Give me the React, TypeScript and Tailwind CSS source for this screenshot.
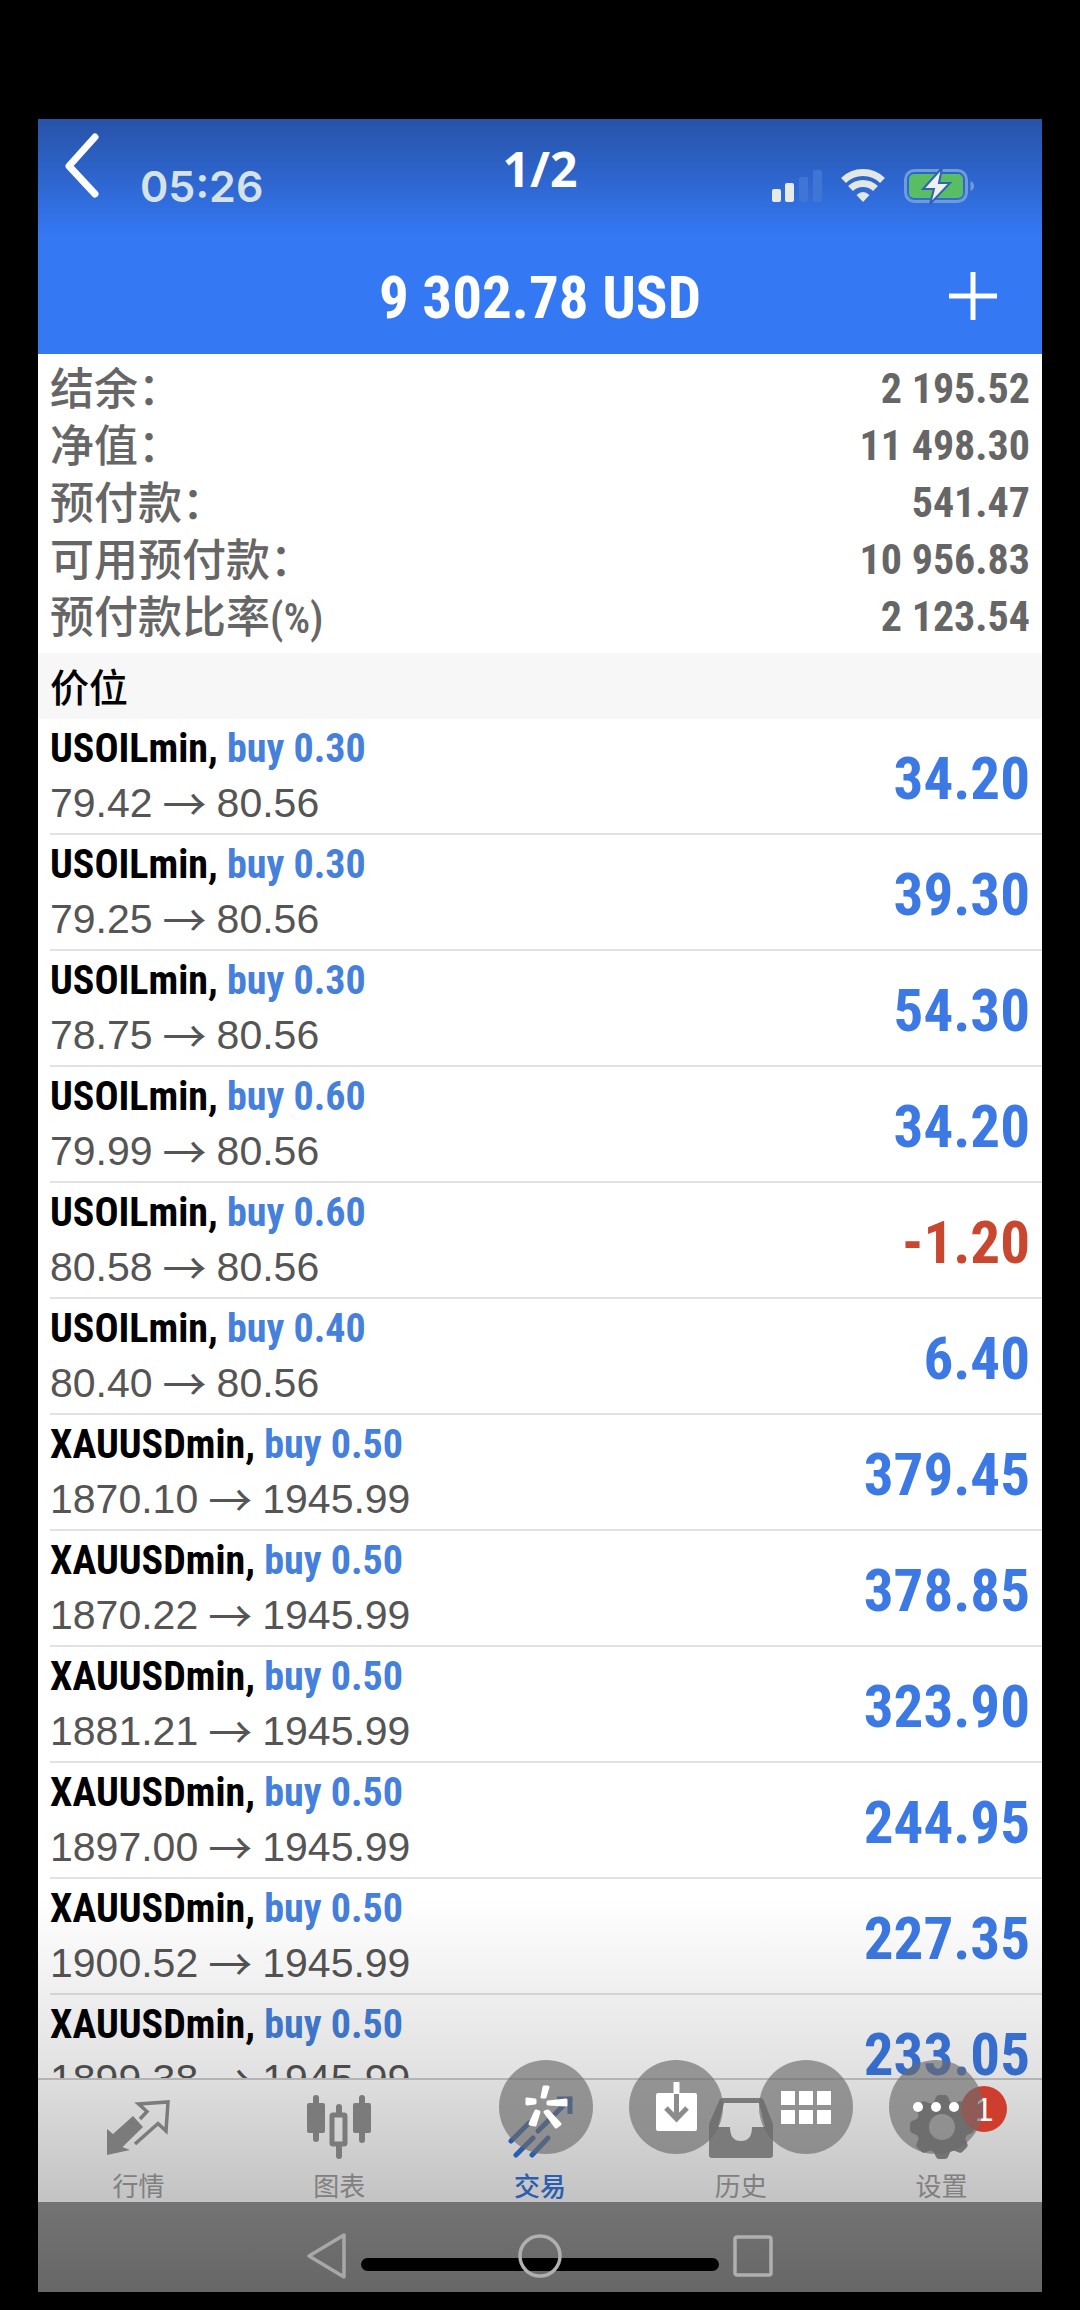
import React from "react";

const SANS = "font-['Roboto_Condensed','Liberation_Sans','Noto_Sans_CJK_SC',sans-serif]";

const summary = [
  { label: "结余：", value: "2 195.52" },
  { label: "净值：", value: "11 498.30" },
  { label: "预付款：", value: "541.47" },
  { label: "可用预付款：", value: "10 956.83" },
  { label: "预付款比率", suffix: "(%)", value: "2 123.54" },
];

const positions = [
  ["USOILmin", "0.30", "79.42", "80.56", "34.20"],
  ["USOILmin", "0.30", "79.25", "80.56", "39.30"],
  ["USOILmin", "0.30", "78.75", "80.56", "54.30"],
  ["USOILmin", "0.60", "79.99", "80.56", "34.20"],
  ["USOILmin", "0.60", "80.58", "80.56", "-1.20"],
  ["USOILmin", "0.40", "80.40", "80.56", "6.40"],
  ["XAUUSDmin", "0.50", "1870.10", "1945.99", "379.45"],
  ["XAUUSDmin", "0.50", "1870.22", "1945.99", "378.85"],
  ["XAUUSDmin", "0.50", "1881.21", "1945.99", "323.90"],
  ["XAUUSDmin", "0.50", "1897.00", "1945.99", "244.95"],
  ["XAUUSDmin", "0.50", "1900.52", "1945.99", "227.35"],
  ["XAUUSDmin", "0.50", "1899.38", "1945.99", "233.05"],
];

function StatusIcons() {
  return (
    <div className="flex items-center gap-[19px]">
      <svg width="50" height="34" viewBox="0 0 50 34" fill="#e6ebe6">
        <rect x="0" y="20" width="9" height="13" rx="2" />
        <rect x="13" y="14" width="9" height="19" rx="2" />
        <rect x="27" y="8" width="9" height="25" rx="2" fill="#3f76d6" />
        <rect x="41" y="1" width="9" height="32" rx="2" fill="#3f76d6" />
      </svg>
      <svg width="44" height="34" viewBox="0 0 44 34" fill="none" stroke="#e2e8e4" strokeWidth="7">
        <path d="M2.500 11.500a28 28 0 0 1 39 0" />
        <path d="M9.500 19.500a18 18 0 0 1 25 0" />
        <path d="M15.500 26q6.500-6 13 0L22 33z" fill="#e2e8e4" stroke="none" />
      </svg>
      <svg width="70" height="38" viewBox="0 0 70 38" fill="none">
        <rect x="1.500" y="3.500" width="61" height="31" rx="9" stroke="#6f9bd8" strokeWidth="3" />
        <rect x="5" y="7" width="54" height="24" rx="5" fill="#58bd63" />
        <path d="M66.500 14q3.500 1.500 3.500 5t-3.500 5z" fill="#6f9bd8" />
        <path d="M38 1L19 22h11l-4 15 20-21H35z" fill="#eef1ee" stroke="#2f62b8" strokeWidth="2" />
      </svg>
    </div>
  );
}

const QuotesIcon = () => (
  <svg width="66" height="66" viewBox="0 0 66 66" fill="#7b7b7b">
    <path d="M2 35L8 40 28 22 38 33 17.500 53 25 56 2 61z" />
    <path d="M35 25L42 17.500 33.600 10 63 8 61 37 53 29.500 30 50" fill="none" stroke="#7b7b7b" strokeWidth="3.500" />
  </svg>
);

const ChartIcon = () => (
  <svg width="66" height="66" viewBox="0 0 66 66" fill="#7b7b7b">
    <rect x="1" y="9" width="18" height="30" rx="2" />
    <rect x="7" y="1" width="6" height="47" rx="3" />
    <rect x="47" y="9" width="18" height="30" rx="2" />
    <rect x="53" y="1" width="6" height="48" rx="3" />
    <rect x="30" y="10" width="6" height="12" rx="3" />
    <rect x="30" y="48" width="6" height="17" rx="3" />
    <rect x="26" y="21" width="13" height="29" rx="1" fill="none" stroke="#7b7b7b" strokeWidth="5" />
  </svg>
);

const TradeIcon = () => (
  <svg width="66" height="66" viewBox="0 0 66 66" fill="none" stroke="#2b5db0" strokeWidth="5">
    <path d="M50 5H63V20" />
    <path d="M63 5L31 37M22 29L4 47M26 44L9 61M41 44L25 61" strokeLinecap="round" />
  </svg>
);

const HistoryIcon = () => (
  <svg width="66" height="66" viewBox="0 0 66 66">
    <path
      fillRule="evenodd"
      fill="#7b7b7b"
      d="M15 4H52Q55 4 56 7L65 30V61Q65 64 62 64H4Q1 64 1 61V30L11 7Q12 4 15 4zM16 9L10 33H22Q22 47 33 47T44 33H57L51 9z"
    />
  </svg>
);

const SettingsIcon = () => (
  <svg width="66" height="66" viewBox="0 0 66 66" fill="#747474">
    <circle cx="33" cy="33" r="19.500" fill="none" stroke="#747474" strokeWidth="13" />
    {[0, 45, 90, 135, 180, 225, 270, 315].map((angle) => (
      <path key={angle} d="M24 10L27 3Q28 1 30 1H36Q38 1 39 3L42 10z" transform={`rotate(${angle} 33 33)`} />
    ))}
  </svg>
);

const tabs = [
  { label: "行情", Icon: QuotesIcon },
  { label: "图表", Icon: ChartIcon },
  { label: "交易", Icon: TradeIcon, active: true },
  { label: "历史", Icon: HistoryIcon },
  { label: "设置", Icon: SettingsIcon, badge: "1" },
];

const viewerActions = [
  {
    label: "Edit",
    art: (
      <g fill="#fff" stroke="#fff" strokeWidth="3" strokeLinejoin="round">
        <path d="M43 37L45 27 49 27 46 37zM36 40L28 39 28 44 36 43zM49 42L67 40 67 45 49 44zM37 51L31 64 36 65 40 52zM46 52L57 67 61 64 49 51z" />
      </g>
    ),
  },
  {
    label: "Save",
    art: (
      <>
        <rect x="27" y="33" width="41" height="38" rx="2" fill="#fff" />
        <path d="M47.500 22V34" stroke="#fff" strokeWidth="6" />
        <path d="M47.500 34V59M37 48L47.500 59 58 48" stroke="#8c8c8c" strokeWidth="5" />
      </>
    ),
  },
  {
    label: "Gallery",
    art: (
      <path fill="#fff" d="M22 31h14v14H22zM40 31h14v14H40zM58 31h14v14H58zM22 50h14v14H22zM40 50h14v14H40zM58 50h14v14H58z" />
    ),
  },
  {
    label: "More",
    art: (
      <g fill="#fff">
        <circle cx="29" cy="47" r="5" />
        <circle cx="47" cy="47" r="5" />
        <circle cx="65" cy="47" r="5" />
      </g>
    ),
  },
];

export default function App() {
  return (
    <div className={`flex h-screen flex-col bg-black px-[38px] pt-[119px] pb-[18px] ${SANS}`}>
      <main className="relative flex min-h-0 flex-1 flex-col overflow-hidden bg-white">
        <header className="relative shrink-0 bg-[#3478f4] bg-linear-to-b from-[#2753a8] from-0% to-[#3478f4] to-50% text-white">
          <div className="flex h-[134px] items-center justify-between pr-[68px] pl-[102px]">
            <time className="font-['Inter',sans-serif] text-[43px] font-semibold text-[#d5e2e6]">05:26</time>
            <StatusIcons />
          </div>
          <div className="grid h-[101px] grid-cols-[1fr_auto_1fr] items-center px-[45px] pb-4">
            <h1 className="col-start-2 pt-1 text-[59px] leading-none font-bold">9 302.78 USD</h1>
            <button aria-label="Add" className="justify-self-end">
              <svg width="48" height="48" viewBox="0 0 48 48" stroke="#fff" strokeWidth="5">
                <path d="M24 0V48M0 24H48" />
              </svg>
            </button>
          </div>
          <button aria-label="Back" className="absolute top-[12px] left-[26px]">
            <svg width="38" height="68" viewBox="0 0 38 68" fill="none" stroke="#fff" strokeWidth="7" strokeLinecap="round" strokeLinejoin="round">
              <path d="M31 6L5 35 31 63" />
            </svg>
          </button>
          <p className="absolute inset-x-0 top-[24px] text-center font-['Noto_Sans',sans-serif] text-[48px] leading-[52px] font-bold">1/2</p>
        </header>

        <dl className="h-[299px] shrink-0 px-3 pt-1 text-[#666]">
          {summary.map((s) => (
            <div key={s.label} className="flex h-[57px] items-center justify-between">
              <dt className="font-['Noto_Sans_CJK_SC',sans-serif] text-[44px] leading-[57px] font-medium">
                {s.label}
                {s.suffix && <span className="font-['Roboto_Condensed','Liberation_Sans',sans-serif] text-[42px] leading-none">{s.suffix}</span>}
              </dt>
              <dd className="pt-1 text-[42px] leading-none font-bold">{s.value}</dd>
            </div>
          ))}
        </dl>

        <h2 className="shrink-0 bg-[#f7f7f7] px-3 pb-0.5 font-['Noto_Sans_CJK_SC',sans-serif] text-[39px] leading-[64px] font-medium text-black">价位</h2>

        <section className="relative min-h-0 flex-1 overflow-hidden">
          <ul className="pl-3">
            {positions.map(([symbol, volume, open, current, profit], i) => (
              <li key={i} className="flex h-[116px] items-center justify-between border-b-2 border-[#e2e2e2] pr-3">
                <div>
                  <p className="text-[40px] leading-[55px] font-bold text-black">
                    {symbol}, <span className="text-[#4480dc]">buy {volume}</span>
                  </p>
                  <p className="flex items-center gap-2.5 font-['Liberation_Sans',sans-serif] text-[41px] leading-[55px] text-[#555]">
                    <span>{open}</span>
                    <span className="pb-1 font-['Noto_Sans_CJK_SC',sans-serif] text-[44px] leading-none">→</span>
                    <span>{current}</span>
                  </p>
                </div>
                <p className={`pt-1 text-[59px] leading-none font-bold ${profit.startsWith("-") ? "text-[#c9462f]" : "text-[#3c79e4]"}`}>
                  {profit}
                </p>
              </li>
            ))}
          </ul>
          <div className="pointer-events-none absolute inset-x-0 bottom-0 h-[180px] bg-linear-to-b from-black/0 to-black/12" />
        </section>

        <nav className="relative flex h-[124px] shrink-0 border-t-2 border-[#b4b4b4] bg-linear-to-b from-[#dedede] to-[#c3c3c3] font-['Noto_Sans_CJK_SC',sans-serif]">
          {tabs.map(({ label, Icon, active, badge }) => (
            <button
              key={label}
              className={`relative flex flex-1 flex-col items-center justify-end gap-3 pb-1 text-[26px] leading-[26px] ${active ? "font-medium text-[#2b5db0]" : "text-[#808080]"}`}
            >
              <Icon />
              <span>{label}</span>
              {badge && (
                <span className="absolute top-[6px] left-[120px] flex size-[46px] items-center justify-center rounded-full bg-[#cf3d2e] font-['Liberation_Sans',sans-serif] text-[34px] text-white">
                  {badge}
                </span>
              )}
            </button>
          ))}
          <div className="absolute -top-[20px] right-[59px] flex gap-[36px]">
            {viewerActions.map(({ label, art }) => (
              <button key={label} aria-label={label} className="size-[94px] rounded-full bg-[#6c6c6c]/65">
                <svg width="94" height="94" viewBox="0 0 94 94" fill="none">
                  {art}
                </svg>
              </button>
            ))}
          </div>
        </nav>

        <footer className="relative flex h-[90px] shrink-0 items-center justify-center bg-linear-to-b from-[#737373] to-[#676767] pt-[18px]">
          <div className="absolute top-[56px] left-1/2 h-[13px] w-[358px] -translate-x-1/2 rounded-full bg-black" />
          <div className="relative flex w-[466px] items-center justify-between">
            <button aria-label="System back">
              <svg width="40" height="46" viewBox="0 0 40 46" fill="none" stroke="#a8a8a8" strokeWidth="3.500" strokeLinejoin="round">
                <path d="M37 2V44L2 23z" />
              </svg>
            </button>
            <button aria-label="Home">
              <svg width="44" height="44" viewBox="0 0 44 44" fill="none" stroke="#b0b0b0" strokeWidth="3.500">
                <circle cx="22" cy="22" r="20" />
              </svg>
            </button>
            <button aria-label="Recent apps">
              <svg width="40" height="42" viewBox="0 0 40 42" fill="none" stroke="#b0b0b0" strokeWidth="3.500">
                <rect x="2" y="2" width="36" height="38" rx="2" />
              </svg>
            </button>
          </div>
        </footer>
      </main>
    </div>
  );
}
